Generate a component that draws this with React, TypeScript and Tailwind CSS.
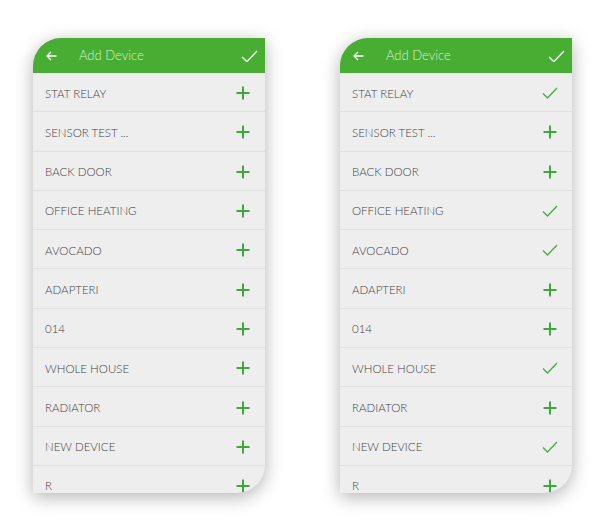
import React from 'react'

type Item = { name: string; added: boolean }

const NAMES = [
  'STAT RELAY',
  'SENSOR TEST ...',
  'BACK DOOR',
  'OFFICE HEATING',
  'AVOCADO',
  'ADAPTERI',
  '014',
  'WHOLE HOUSE',
  'RADIATOR',
  'NEW DEVICE',
  'R',
]

const ADDED = ['STAT RELAY', 'OFFICE HEATING', 'AVOCADO', 'WHOLE HOUSE', 'NEW DEVICE']

function Plus() {
  return (
    <svg width="14" height="14" viewBox="0 0 14 14">
      <path d="M7 0.5v13M0.5 7h13" stroke="#3ea83a" strokeWidth="2" fill="none" />
    </svg>
  )
}

function Check({ color = '#46ad40', size = 16 }: { color?: string; size?: number }) {
  return (
    <svg width={size} height={size * 0.75} viewBox="0 0 16 12">
      <path d="M1 6.5l4.5 4.5L15 1" stroke={color} strokeWidth="1.3" fill="none" />
    </svg>
  )
}

function Panel({ items }: { items: Item[] }) {
  return (
    <div className="w-[232px] h-[455px] rounded-tl-[28px] rounded-br-[28px] overflow-hidden bg-[#eeeeee] shadow-[0_4px_18px_rgba(0,0,0,0.3)] flex flex-col">
      <div className="h-[35px] shrink-0 bg-[#47ad33] flex items-center pl-[12px] pr-[7px] pt-[1px]">
        <svg width="11" height="10" viewBox="0 0 11 10" className="ml-[1px]">
          <path d="M10.5 5H1M5 1L1 5l4 4" stroke="#ffffff" strokeWidth="1.3" fill="none" />
        </svg>
        <span className="ml-[22px] text-[13px] font-light text-[#d8efd2] [font-family:Lato,sans-serif]">Add Device</span>
        <span className="ml-auto">
          <Check color="#ffffff" size={17} />
        </span>
      </div>
      {items.map(item => (
        <div
          key={item.name}
          className="h-[39.3px] shrink-0 flex items-center justify-between pl-[12px] pr-[14px] pt-[2px] border-b border-[#e0e0e0]"
        >
          <span className="text-[11.5px] text-[#444444] font-light [font-family:Lato,sans-serif]">
            {item.name}
          </span>
          <span className="w-[16px] flex justify-center">{item.added ? <Check /> : <Plus />}</span>
        </div>
      ))}
    </div>
  )
}

export default function App() {
  const left = NAMES.map(name => ({ name, added: false }))
  const right = NAMES.map(name => ({ name, added: ADDED.includes(name) }))
  return (
    <div className="w-[602px] h-[525px] bg-white flex gap-[75px] pl-[33px] pt-[38px]">
      <Panel items={left} />
      <Panel items={right} />
    </div>
  )
}
